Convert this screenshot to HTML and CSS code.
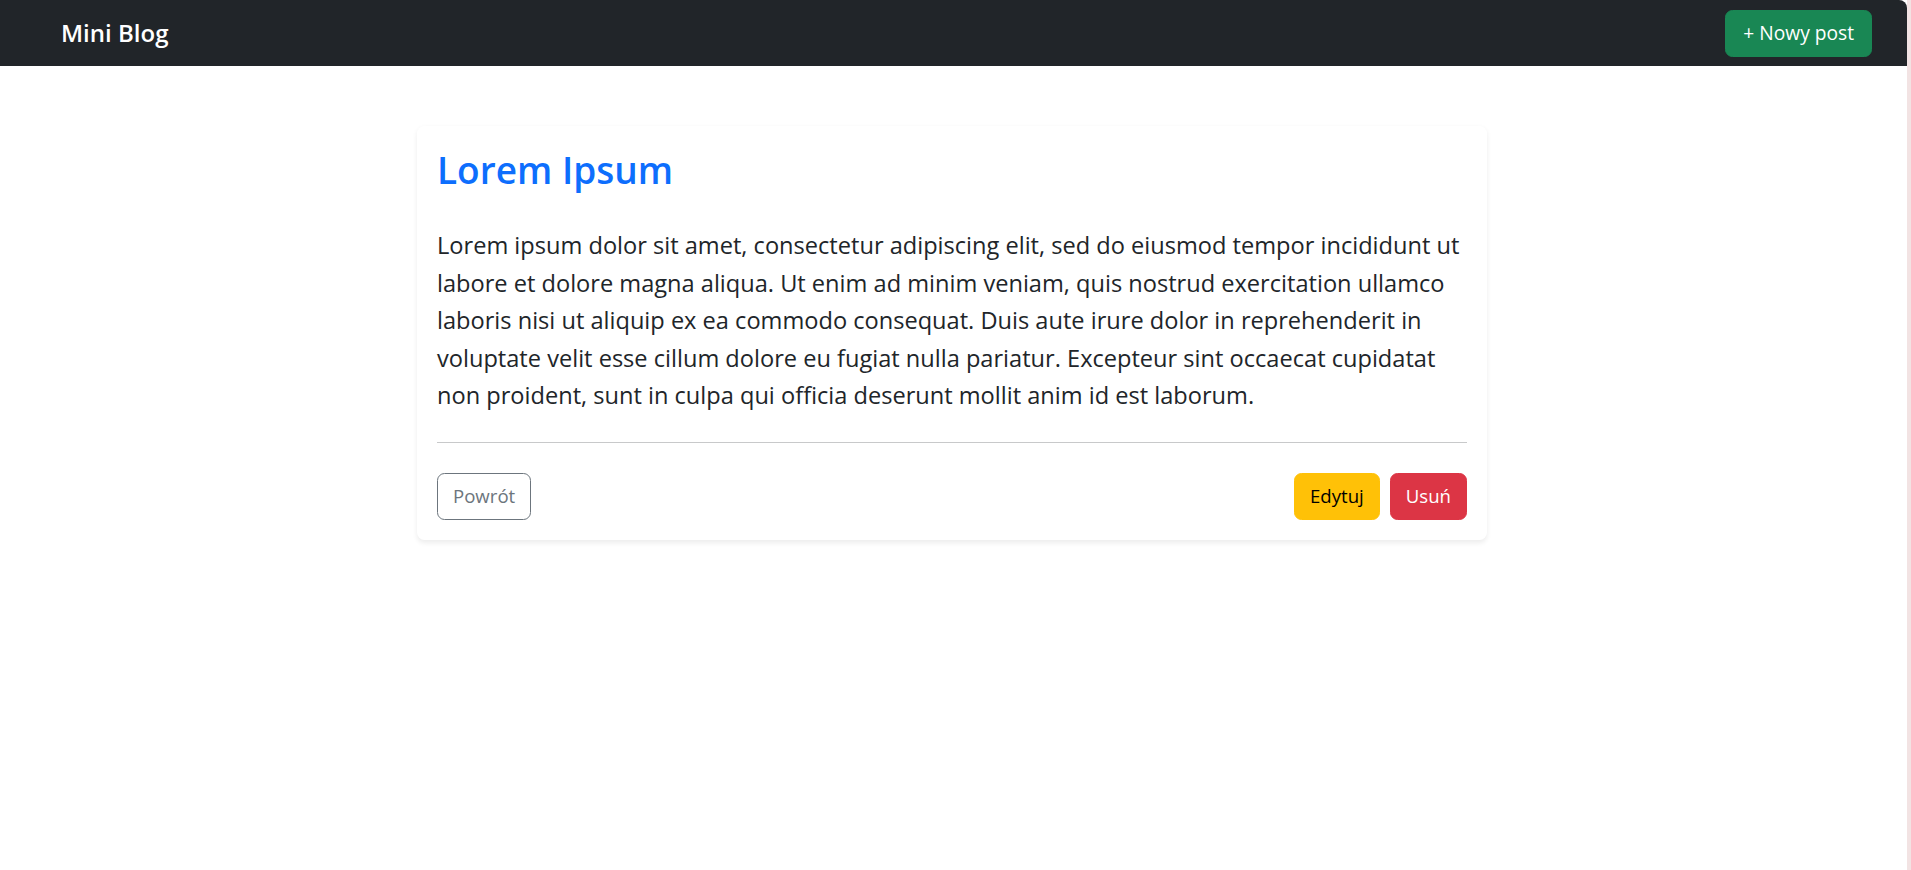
FILE: index.html
```html
<!DOCTYPE html>
<html lang="pl">
<head>
<meta charset="utf-8">
<title>Mini Blog</title>
<link rel="stylesheet" href="styles.css">
</head>
<body>
<div class="page">
  <nav class="navbar">
    <a class="brand" href="#">Mini Blog</a>
    <a class="btn btn-success" href="#">+ Nowy post</a>
  </nav>
  <main class="main">
    <article class="card">
      <h2 class="card-title">Lorem Ipsum</h2>
      <p class="card-text">Lorem ipsum dolor sit amet, consectetur adipiscing elit, sed do eiusmod tempor incididunt ut labore et dolore magna aliqua. Ut enim ad minim veniam, quis nostrud exercitation ullamco laboris nisi ut aliquip ex ea commodo consequat. Duis aute irure dolor in reprehenderit in voluptate velit esse cillum dolore eu fugiat nulla pariatur. Excepteur sint occaecat cupidatat non proident, sunt in culpa qui officia deserunt mollit anim id est laborum.</p>
      <hr class="divider">
      <div class="actions">
        <a class="btn btn-outline" href="#">Powrót</a>
        <div class="actions-right">
          <a class="btn btn-warning" href="#">Edytuj</a>
          <a class="btn btn-danger" href="#">Usuń</a>
        </div>
      </div>
    </article>
  </main>
</div>
</body>
</html>
```
FILE: styles.css
```css
html, body {
  margin: 0;
  padding: 0;
  height: 100%;
}
body {
  background: #f2e3e3;
  font-family: "Open Sans", "Noto Sans", sans-serif;
  color: #212529;
}
.page {
  width: 1907px;
  min-height: 100%;
  background: #ffffff;
}
.navbar {
  height: 66px;
  box-sizing: border-box;
  background: #212529;
  display: flex;
  align-items: center;
  justify-content: space-between;
  padding: 0 35px 0 61px;
  border-top-right-radius: 8px;
}
.brand {
  color: #ffffff;
  text-decoration: none;
  font-size: 24px;
  font-weight: 600;
  line-height: 30px;
}
.btn {
  display: inline-flex;
  align-items: center;
  justify-content: center;
  box-sizing: border-box;
  height: 47px;
  padding: 0 15px;
  font-size: 18.6px;
  line-height: 1;
  text-decoration: none;
  border-radius: 7.5px;
  border: 1px solid transparent;
}
.btn-success {
  background: #198754;
  border-color: #198754;
  color: #ffffff;
  padding: 0 17px;
  font-size: 19.2px;
}
.main {
  padding-top: 60px;
  padding-right: 3px;
}
.card {
  width: 1070px;
  box-sizing: border-box;
  margin: 0 auto;
  padding: 20px;
  background: #ffffff;
  border-radius: 7.5px;
  box-shadow: 0 2.5px 5px rgba(0, 0, 0, 0.075);
}
.card-title {
  margin: 0 0 30px;
  font-size: 37px;
  line-height: 48px;
  font-weight: 600;
  color: #0d6efd;
}
.card-text {
  margin: 0 0 27px;
  padding-top: 3px;
  font-size: 23.6px;
  line-height: 37.5px;
}
.divider {
  margin: 0 0 30px;
  border: 0;
  border-top: 1px solid #c8c9ca;
  height: 0;
}
.actions {
  display: flex;
  justify-content: space-between;
  align-items: center;
}
.actions-right {
  display: flex;
  gap: 10px;
}
.btn-outline {
  color: #6c757d;
  border-color: #6c757d;
  background: #ffffff;
}
.btn-warning {
  background: #ffc107;
  border-color: #ffc107;
  color: #000000;
}
.btn-danger {
  background: #dc3545;
  border-color: #dc3545;
  color: #ffffff;
}
```
